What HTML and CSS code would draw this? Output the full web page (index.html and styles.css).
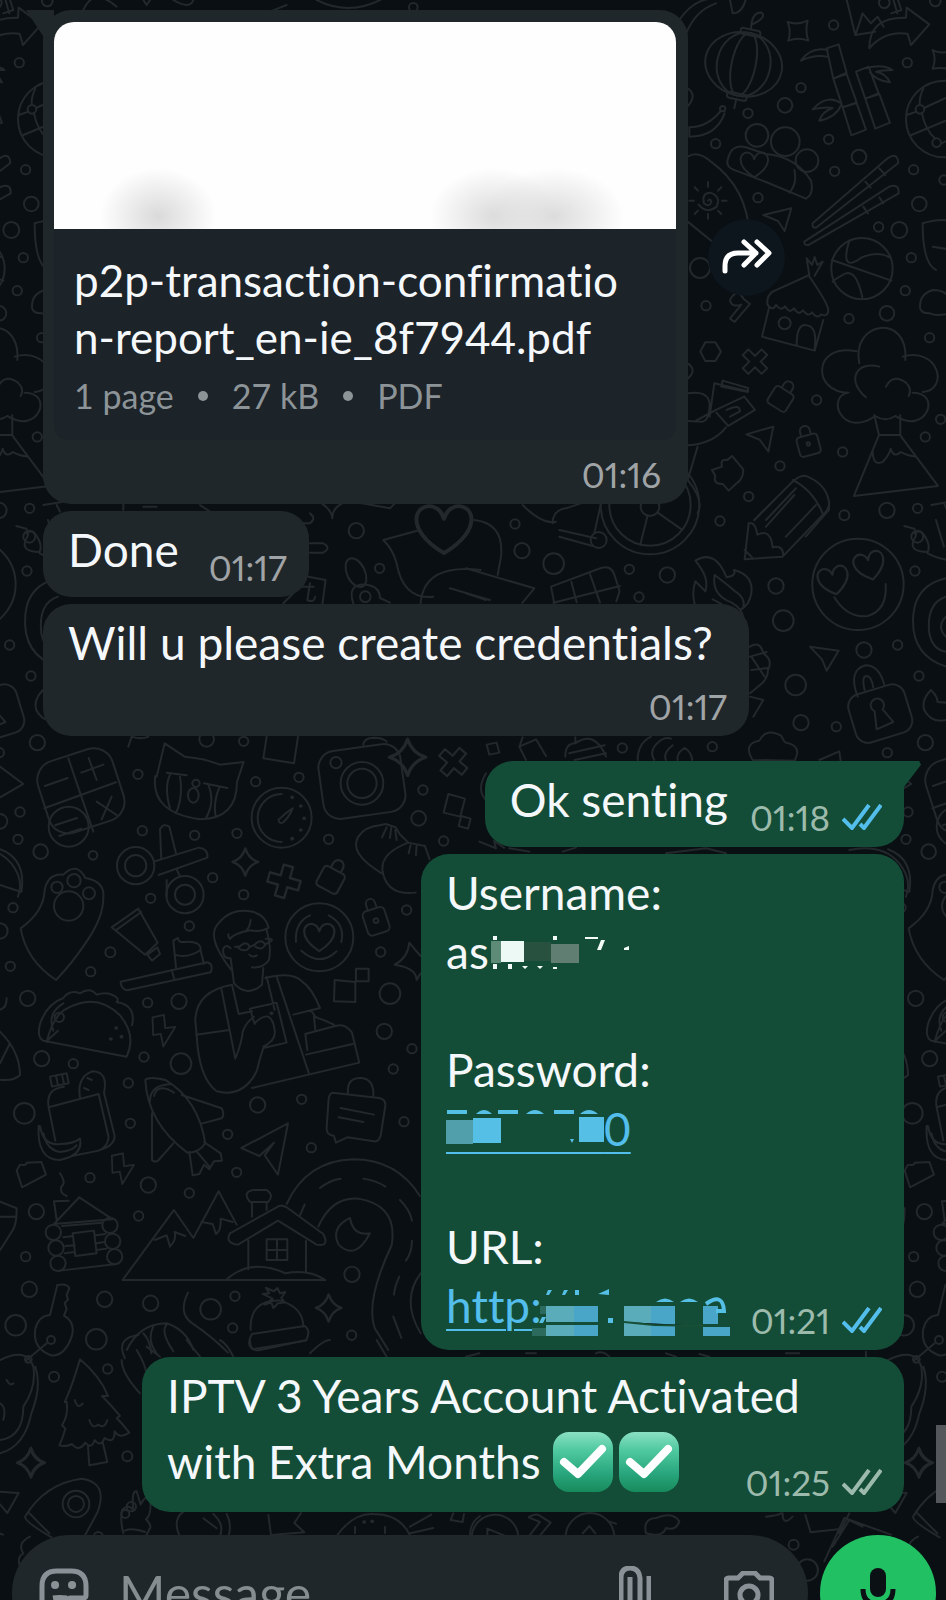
FILE: index.html
```html
<!DOCTYPE html>
<html lang="en">

<head>
    <meta charset="UTF-8">
    <meta name="viewport" content="width=device-width, initial-scale=1.0">
    <title>Chat</title>
    <link rel="stylesheet" href="styles.css">
</head>

<body>
    <!-- Doodle wallpaper, repeats every 888px -->
    <svg class="wallpaper" aria-hidden="true">
        <defs>
            <path id="star" d="M0-34Q8-8 32 0Q8 8 0 34Q-8 8-32 0Q-8-8 0-34Z" />
            <path id="cross" d="M-12-40h24v28h28v24h-28v28h-24v-28h-28v-24h28z" />
            <g id="lock">
                <rect x="-32" y="-22" width="64" height="60" rx="10" />
                <path d="M-15-22v-14a15 15 0 0 1 30 0v14" />
            </g>
            <path id="bolt" d="M-32-42l36-8 4 42 32-4-38 62-8-40-24 4z" />
            <path id="heart" d="M0 34C-60-4-44-44-18-40Q-4-36 0-20Q4-36 18-40C44-44 60-4 0 34Z" />
            <path id="dart" d="M-42-28L42-34 12 36-6-4Z" />
            <g id="tile">
                <g transform="scale(.3333)">
                    <path d="M20-30l20 60-30 10M250 30q30-70 100-10M410-30l30 45 20-30M520 0q50 30 60 0" />
                    <path d="M810 35l50-20M950 0q100 50 200-5" />
                    <circle cx="1240" cy="22" r="13" />
                </g>
                <g transform="translate(466) scale(.3333)">
                    <!-- lantern -->
                    <g transform="rotate(12 833 193)">
                        <ellipse cx="833" cy="193" rx="116" ry="96" />
                        <ellipse cx="833" cy="193" rx="80" ry="96" />
                        <ellipse cx="833" cy="193" rx="36" ry="96" />
                        <rect x="803" y="86" width="60" height="18" rx="8" />
                        <rect x="803" y="282" width="60" height="18" rx="8" />
                        <path d="M833 86q-10-50 20-56q20 10-20 40M833 300v28" />
                    </g>
                    <circle cx="770" cy="326" r="8" />
                    <path d="M765 332q-40 50-95 50v28q80 0 106-70" />
                    <path d="M640 60q40-60 100-65M660 100q30-70 90-90M790-10l10 50q30 0 40-45" />
                    <path d="M965 66q30 10 60-4q-8 30 2 60q-30-12-60 0q10-28-2-56z" />
                    <path d="M1140-10l28 115 60-10M1170 100l20-60 25 30 20-20 18 30M1280-10l14 50" />
                    <path d="M1210 145q0-95 110-92l2-30 68 50-55 62-10-34q-70-10-115 44z" />
                    <!-- bamboo -->
                    <path d="M1082 145l36-12 24 85-40 18zM1102 236l40-14 30 85-42 15zM1130 322l42-13 28 80-44 17zM1085 150q-50-10-80 32q40-20 80-12" />
                    <path d="M1170 215l38-15 30 80-40 16zM1198 296l42-14 32 86-44 18zM1200 205q50-15 80 5q-30 0-50 5q30 5 42 32q-40-5-60-30" />
                    <path d="M1125 310q-40-30-85 18q40-8 60-4q-30 10-40 38q50-10 65-46" />
                    <path d="M1400 150q20 12 60 4q-10 30 0 56q-30-10-60-4q12-30 0-56z" />
                    <!-- beach ball -->
                    <circle cx="1435" cy="357" r="115" />
                    <circle cx="1362" cy="328" r="13" />
                    <circle cx="1412" cy="428" r="13" />
                    <path d="M1372 266q-14 30-10 50M1322 345l30-10M1368 340q10 50 40 76M1374 324l110-50M1336 405l160-66M1424 432q30-20 120-30" />
                    <!-- people -->
                    <circle cx="873" cy="406" r="34" />
                    <circle cx="958" cy="425" r="43" />
                    <circle cx="1023" cy="482" r="34" />
                    <path d="M785 480q10-50 55-38l60 20q90 8 135 80q10 40-15 54l-120-50-100-38q-20-10-15-28zM985 510q10 40-15 68" />
                    <use href="#heart" x="865" y="498" />
                    <!-- sun hill -->
                    <path d="M665 470q30-20 70 15q110 80 115 220M665 665l80 65" />
                    <path d="M726 602q8-8 10 4q-6 18-22 4q-8-30 18-32q34 10 20 42q-30 24-54-6" />
                    <path d="M726 560v-14M726 642v14M684 602h-14M768 602h14M696 572l-10-10M756 572l10-10M696 632l-10 10M756 632l10 10" />
                    <path d="M892 645l84-20-20 68-20-30z" />
                    <!-- chopsticks -->
                    <path d="M1040 670l225-195q30-20 32 14l-245 193q-15 4-12-12zM1198 545l16 18M1240 505l18 20" />
                    <path d="M1015 725l255-165q30-10 28 20l-270 155q-14 2-13-10zM1192 620l14 20M1240 592l12 18" />
                    <!-- basketball -->
                    <circle cx="1188" cy="806" r="92" />
                    <path d="M1098 780l178 62M1150 722q-30 100 38 50q50-20 82 0M1190 896q-20-100-62-70q-20 10-28 20" />
                    <!-- hut -->
                    <path d="M1030 825l-8-50 16 20 8-24 8 24 16-10-24 42M1030 825l-110 50q-20 15-15 40q15 20 25 0q15 20 27 4q15 24 27 6q15 24 27 6q15 22 27 6q15 22 27 6q20 10 22-12q0-20-60-106M910 920l-22 90 158 42 26-92M992 1035q0-70 34-58q28 6 20 68" />
                    <circle cx="956" cy="970" r="18" />
                    <path d="M792 900q20-40 42-2l18 14-46 54-14-10 34-42q-30 10-34-14z" />
                    <path d="M718 1027h30l17 28-17 28h-30l-15-28z" />
                    <use href="#cross" transform="translate(867 1085) rotate(45)" />
                    <use href="#lock" transform="translate(948 1190) rotate(32)" />
                    <g transform="translate(1026 1328) rotate(-15)">
                        <use href="#lock" />
                        <circle r="5" cy="4" />
                    </g>
                    <use href="#dart" transform="translate(888 1322) rotate(-12)" />
                    <!-- tree and volcano -->
                    <path d="M1180 1090c-25-130 150-150 138-10M1310 1070c110-30 140 100 60 106M1340 1178c90 0 40 130-52 70q-30 20-60 0c-100 70-150-60-80-70c-110 0-110-150 24-124M1200 1192c-60-50-30-110 40-92M1260 1160q20-40 60-12q20 20 8 40M1225 1245l14 60h64v-60M1238 1308l-74 180 252-30-112-150M1220 1350q0 50 30 36q20-20 24-40q10 30 30 10q20 12 46 14" />
                    <!-- money hand -->
                    <path d="M665 1180q60-10 66 30q0 60-30 55l-36-2M745 1150l-14 100M745 1150l100 24M770 1142l76 22v12l-80-16zM690 1262l60-32 85-40 32 40-80 48-36-40M782 1230q40-20 40 4l-30 16M780 1282q-40 50-115 54M695 1340l-30 100" />
                    <path d="M738 1410l30-10q-6-24 16-20l14-12 34 40q0 30-20 42l-24 22-18-20q-30 0-22-24z" />
                    <path d="M865 1560l110-110q30-30 50-20q70 30 64 100l-70 80M980 1440q60 30 90 100M900 1560l90-95" />
                    <path d="M1370 670q70-20 90 0M1370 670q0 120 40 140M1400 740l60 10" />
                    <path d="M1362 920q0-40 40-50q40 0 50 30v40q-40 10-60 0q-30 0-30-20" />
                    <path d="M665 1440q50 60 30 100M665 265q30 20 0 54M665 1090q30 20 0 46" />
                    <circle cx="1103" cy="75" r="14" />
                    <circle cx="1324" cy="188" r="14" />
                    <circle cx="1255" cy="8" r="16" />
                    <circle cx="1408" cy="3" r="16" />
                    <circle cx="1005" cy="263" r="14" />
                    <circle cx="957" cy="316" r="22" />
                    <circle cx="846" cy="340" r="14" />
                    <circle cx="749" cy="431" r="14" />
                    <circle cx="1088" cy="418" r="14" />
                    <circle cx="1179" cy="471" r="22" />
                    <circle cx="1106" cy="514" r="14" />
                    <circle cx="1343" cy="509" r="14" />
                    <circle cx="1434" cy="540" r="14" />
                    <circle cx="876" cy="593" r="14" />
                    <circle cx="1360" cy="612" r="22" />
                    <circle cx="1238" cy="681" r="14" />
                    <circle cx="1300" cy="690" r="24" />
                    <circle cx="1336" cy="773" r="14" />
                    <circle cx="702" cy="804" r="30" />
                    <circle cx="1318" cy="872" r="14" />
                    <circle cx="720" cy="917" r="14" />
                    <circle cx="1263" cy="940" r="22" />
                    <circle cx="1149" cy="956" r="14" />
                    <circle cx="1391" cy="1013" r="14" />
                    <circle cx="1052" cy="1200" r="14" />
                    <circle cx="1424" cy="1258" r="14" />
                    <circle cx="1378" cy="1311" r="14" />
                    <circle cx="1130" cy="1356" r="14" />
                    <circle cx="942" cy="1398" r="14" />
                    <circle cx="848" cy="1490" r="14" />
                </g>
                <g transform="translate(0 500) scale(.3333)">
                    <!-- strip between and beside the bubbles -->
                    <path d="M130 15l60-10M170 15l10 20M370 10v20M430 20h40M600 15l30 20M930 40q20 15 0 30h-40M930 130h40q25 12 0 28h-40M925 230l52 10-10 75M905 260h36M930 250l-8 50q20 10 24-10M850 310l30-30" />
                    <path d="M965 10q30 20 32 45q0-30 30-45M1060 5l110 20 20-20M1150 120l110-30M1150 120q30 30 40 70q20 110 110 100M1262 310q10-120 180-100M1350 265l120 35" />
                    <use href="#heart" transform="translate(1332 95) scale(2 1.9)" />
                    <ellipse cx="1068" cy="218" rx="27" ry="46" transform="rotate(-25 1068 218)" />
                    <path d="M1060 310q-20-60 40-56q40 6 40 40l30 14" />
                    <circle cx="1096" cy="290" r="16" />
                    <circle cx="1069" cy="92" r="23" />
                    <circle cx="1139" cy="205" r="14" />
                    <!-- calculator -->
                    <rect x="125" y="760" width="235" height="225" rx="60" transform="rotate(-18 243 872)" />
                    <path d="M205 775l75 220M133 925l215-78M135 858l68-24M244 818l66-24M266 774l24 66M290 905l60 40M335 890l-30 68" />
                    <circle cx="206" cy="980" r="60" />
                    <path d="M165 976l66-22M178 1008l66-22" />
                    <!-- cat -->
                    <path d="M470 830l24-100 60 40q60 5 105 24l72-8-20 60q0 110-110 112q-150-20-135-130zM500 818l60 8M612 850l70 14M510 824q-18 40 0 100M540 830q10 60-12 110M626 856q20 50-8 98M658 862q-20 50-10 90" />
                    <ellipse cx="580" cy="886" rx="16" ry="22" />
                    <circle cx="588" cy="850" r="11" />
                    <path d="M800 710l-10 65 92 15 12-80M385 740l10-30q30 10 50 0" />
                    <!-- dial -->
                    <circle cx="845" cy="953" r="90" />
                    <path d="M845 882a72 72 0 1 0 0 144M878 925q-20 12-42 34q0 14 14 8q20-20 28-42z" />
                    <path class="dots" d="M876 892h1M902 918h1M912 955h1M902 990h1M876 1016h1" />
                    <!-- camera -->
                    <rect x="962" y="742" width="248" height="205" rx="50" transform="rotate(-8 1086 845)" />
                    <circle cx="1086" cy="850" r="64" />
                    <circle cx="1086" cy="850" r="44" />
                    <circle cx="1008" cy="788" r="17" />
                    <path d="M1090 735q0-20 30-22q30 0 40 12" />
                    <use href="#star" transform="translate(1223 772) scale(1.7 1.6)" />
                    <use href="#cross" transform="translate(1360 786) rotate(40) scale(1.1)" />
                    <path d="M1345 882l50 14-14 54-50-12zM1384 948l28 8-8 30-28-8z" />
                    <path d="M1145 1120q-100-60-70-110q20-30 64-34l18-4 30 10 12 20 26 26q-80 30-78 80q10 80 100 70M1225 1028l50 10 14 40M1160 982l-14 30M1174 984l-4 30M1186 990l4 30M1232 1036l-6 24M1250 1036l-2 30" />
                    <!-- toothed fan -->
                    <circle cx="407" cy="1097" r="56" />
                    <circle cx="407" cy="1097" r="32" />
                    <circle cx="555" cy="1184" r="56" />
                    <circle cx="555" cy="1184" r="30" />
                    <path d="M462 1085l134-42q30 4 26 30l-146 52M484 1078l-4-90q10-20 28-8l20 80M500 1140v50M540 1130l-10-22" />
                    <use href="#star" transform="translate(736 1086) scale(1.2)" />
                    <use href="#cross" transform="translate(852 1144) rotate(16) scale(1.2)" />
                    <use href="#lock" transform="translate(996 1132) rotate(28) scale(1.1)" />
                    <circle cx="112" cy="728" r="23" />
                    <circle cx="620" cy="718" r="22" />
                    <circle cx="731" cy="724" r="14" />
                    <circle cx="414" cy="823" r="14" />
                    <circle cx="767" cy="845" r="14" />
                    <circle cx="897" cy="832" r="14" />
                    <circle cx="1269" cy="870" r="14" />
                    <circle cx="1256" cy="955" r="22" />
                    <circle cx="60" cy="936" r="14" />
                    <circle cx="0" cy="964" r="22" />
                    <circle cx="427" cy="992" r="14" />
                    <circle cx="584" cy="1006" r="14" />
                    <circle cx="711" cy="1000" r="14" />
                    <circle cx="986" cy="1018" r="14" />
                    <circle cx="1331" cy="1023" r="14" />
                    <circle cx="54" cy="1018" r="14" />
                    <circle cx="122" cy="1055" r="22" />
                    <circle cx="279" cy="1066" r="13" />
                    <circle cx="638" cy="1133" r="14" />
                    <circle cx="731" cy="1184" r="14" />
                    <path d="M0 800l70 52-70 40M0 1048q80 30 64 128L0 1155" />
                </g>
                <g transform="translate(466 500) scale(.3333)">
                    <!-- wheel -->
                    <circle cx="552" cy="15" r="148" />
                    <circle cx="552" cy="15" r="122" />
                    <circle cx="552" cy="20" r="28" />
                    <path d="M545 46l-22 88M575 38l72 50M25 60q90 10 80 110l-10 55M0 205l205 60-36 44M0 280l60 20M170 15q60 60 100 50M260 70q0-40 40-45l60-20M280 90l110 25M280 110l100 28M405 10l-20 90" />
                    <circle cx="398" cy="120" r="24" />
                    <!-- grid box -->
                    <path d="M255 260l150-56q30-10 40 20l16 50-10 30M255 260l10 50M316 245l16 62M372 222l30 86M262 308l200-50" />
                    <!-- flame -->
                    <path d="M688 320q-12-40 0-76l30 30q14-40-30-92q60-36 94 50q30-4 22-22q60 16 52 70q-6 36-32 48M746 225q-10 60 50 82q36 20 36 52M746 225q40 30 60 48q34 20 26 52M740 298l26 14" />
                    <!-- pencil -->
                    <path d="M865 60l65-65M1090 5q0 24-20 40l-120 125-114 8 12-108q20-6 26 34q40-20 46 38q30-8 32 22M900 80l85-95M960 110l90-95M836 150l26 26" />
                    <!-- smiley -->
                    <circle cx="1176" cy="253" r="137" />
                    <use href="#heart" transform="translate(1104 246) rotate(-12) scale(1.1)" />
                    <use href="#heart" transform="translate(1212 202) rotate(-14) scale(1.1)" />
                    <path d="M1105 292q40 64 100 56q60-18 54-96" />
                    <path d="M1032 440l86 12-36 60-14-34z" />
                    <path d="M1315 78l30 8q10 20 0 30q-20 40 40 40q10-20-10-50q-10-20-30-6M1385 160q40 20 70 20M1410 60l24 80" />
                    <circle cx="1354" cy="110" r="18" />
                    <path d="M1440 235q-90 20-98 110q-10 120 98 155M1440 290q-60 20-50 110q10 50 50 55M1440 350q-30 30 0 60" />
                    <!-- padlock -->
                    <rect x="1155" y="566" width="175" height="150" rx="38" transform="rotate(-17 1242 640)" />
                    <path d="M1175 590q-30-80 24-94q40 0 56 58M1196 570q-10-42 6-42q14 0 20 34" />
                    <path d="M1226 634a20 20 0 1 1 24-6l32 38-50 22z" />
                    <path d="M1395 570q-30 30-20 60q20 40 66 30M1395 570q20 20 20 36l26 2" />
                    <path d="M852 440q30-20 40 20q30 20 14 50q0 30-30 50l-24 20M852 470l50-14M856 510l50-6M856 470l40 60M852 590l40 10-30 50" />
                    <path d="M62 734l30-6 8 30-30 6zM160 740l10-28M160 740l50-22 30 50M160 740l20 40M298 770q0-40 30-40v-18M310 760l106-24M326 780l94-20M328 730q60-40 92 40M515 780q0-50 40-70M565 780q-20-30 20-60q16-10 30-4M600 780q-10-20 20-44M635 780q-4-20 20-36q20 10 24 36" />
                    <path d="M860 780q-30-50 20-58q20-40 66-14q10 20 14 20q50 10 26 54zM1060 780l60-26 4 28" />
                    <circle cx="147" cy="72" r="14" />
                    <circle cx="168" cy="152" r="23" />
                    <circle cx="263" cy="191" r="31" />
                    <circle cx="490" cy="208" r="14" />
                    <circle cx="519" cy="291" r="14" />
                    <circle cx="604" cy="225" r="23" />
                    <circle cx="762" cy="63" r="14" />
                    <circle cx="930" cy="258" r="23" />
                    <circle cx="952" cy="362" r="31" />
                    <circle cx="1135" cy="46" r="15" />
                    <circle cx="1263" cy="31" r="23" />
                    <circle cx="1355" cy="25" r="14" />
                    <circle cx="1347" cy="213" r="14" />
                    <circle cx="1295" cy="435" r="14" />
                    <circle cx="1194" cy="450" r="23" />
                    <circle cx="989" cy="555" r="31" />
                    <circle cx="1359" cy="528" r="14" />
                    <circle cx="1005" cy="668" r="23" />
                    <circle cx="1111" cy="680" r="14" />
                    <circle cx="1264" cy="758" r="14" />
                    <circle cx="469" cy="744" r="14" />
                    <circle cx="739" cy="740" r="14" />
                    <path d="M60 820q-30 50 0 80M40 1025l50 20-6-22 30 20M130 1045l60 10M290 1055l40-12M600 1060l120-15 60 15M1150 1050q100-20 150 40q40 50 20 100" />
                </g>
                <g transform="translate(0 850) scale(.3333)">
                    <!-- paw -->
                    <path d="M168 390q-90-60-106-155q70-50 72-115q10-50 56-46q40-40 66 10q60 10 54 60q0 60-54 136q-40 60-88 110z" />
                    <circle cx="206" cy="168" r="44" />
                    <circle cx="171" cy="112" r="17" />
                    <circle cx="222" cy="92" r="20" />
                    <circle cx="267" cy="130" r="18" />
                    <!-- toothpaste and brush -->
                    <path d="M335 232l80-56 58 102-38 36zM346 242l78-56M442 314l30-22 8 20-24 20z" />
                    <path d="M362 395l260-58q20 6 10 30l-250 54q-20-4-20-26zM515 360l8 28M528 352l-8-80 14-8q0 14 20 12q50-4 48 26l10 40M524 314q40 12 78-14" />
                    <!-- barista -->
                    <path d="M694 360q-70-90-46-130q40-60 110-45q40 12 48 48q-20 14-56 8q-50 10-60 26q-8-10-4-14M752 210q-2 24-16 34M800 240q16 60 6 92q-20 24-50 20M690 325q-24 0-20-30q10-14 22 0M692 325l10 75q40 44 84 4l4-50M705 290h14q20-20 30 0q-12 20-34 4M752 290l12-6q20-20 32 0q-10 20-30 6M795 284l20-12q4-8-18-6M748 314q10 10 22 2" />
                    <path d="M696 404q-110 20-110 110l4 40q6 130 60 170q80 20 120-60q10-40 20-70l70-16-30-120-80 18 14 46M696 404l20 88 40-8M664 416l42 210q20-50 22-80q10-30 34-45M588 554l100-14M800 380l24 100M830 380l96 288M796 384q80-20 110 10q30 20 54 80l-80 20M790 590q40-20 34-50q-10-70-60-20M756 714l322-76-22-90q-20-30-50-20l-90 24 6 48M918 614l140-32M946 540l-4-40q30 10 60 24M946 500l-14-20" />
                    <path class="dots" d="M814 490h1" />
                    <!-- cup -->
                    <circle cx="958" cy="262" r="102" />
                    <use href="#heart" transform="translate(958 266) scale(1.1)" />
                    <path d="M930 196q-46 20-42 80M986 196q50 26 38 80M904 302q56 50 106 2" />
                    <path d="M1004 390l62 6v60l-64-2zM1068 356h38v38h-38z" />
                    <g transform="translate(1128 212) rotate(-18)">
                        <rect x="-34" y="-36" width="68" height="76" rx="14" />
                        <path d="M-14-36v-16a14 16 0 0 1 28 0v16" />
                        <circle r="7" />
                    </g>
                    <path d="M1262 370l-12 20q0-36-66-46q40-20 44-66q16 20 34 40" />
                    <!-- taco -->
                    <path d="M140 576q20-80 60-100q90-50 160 20q50 60 20 124l-250-48q-20-10-10-50q20-60 70-78q20-26 50-14q30-20 50 4q30-10 50 2q20 10 10 20q60 10 46 70M190 460q-50 30-30 82M140 574l34-32" />
                    <circle cx="178" cy="502" r="14" />
                    <path class="dots" d="M348 534h1M364 560h1M332 567h1" />
                    <use href="#bolt" transform="translate(488 542) scale(.95)" />
                    <!-- backpack -->
                    <path d="M146 772q-10-56 46-62M240 742q-10-60 36-78q50 0 36 66M146 772l150-40M146 772l20 100M296 732l30 130q-4 30-30 40l-80 16M312 728l32 130q0 30-50 44M150 680l50-10 6 30-50 10zM168 678l6 28M186 674l6 28M262 684l14 6M252 714l14 6M120 828q10 60 60 54q40 0 60-16q10 50-60 64q-70 0-64-102z" />
                    <path d="M130 850q10 50 50 56q40-4 50-20" />
                    <!-- rocket -->
                    <path d="M436 690q10-12 60 0q100 60 120 190q-20 30-54 28q-120-90-126-218zM450 755q0-50 60-52M462 738q10-40 60-10M545 735l120 40q10 20 0 30l-60 16M456 790v140q10 10 20 0l44-50M568 906l10 70 20-4 14-28 16 14 14-24 24-2-4-22-50-34M590 904l40 48" />
                    <!-- chat bag -->
                    <path d="M998 728l140 16q20 4 18 24l-14 90q-8 20-20 16l-80-12-34 16-6-20q-24-4-22-24l6-88q4-18 12-18zM1044 730q-4-48 40-46q40 4 36 56M1022 774l100 20M1016 802l74 14" />
                    <path d="M864 820l-30 154-40-58 28-38-44 40-54-24z" />
                    <path d="M50 962l10-18q20 4 20-6l44-2 14 38-72 38zM180 970q20 30 4 40q-6 20 16 28" />
                    <use href="#bolt" transform="translate(365 956) scale(.92)" />
                    <!-- cabin -->
                    <path d="M162 1122l76-80 100 66zM170 1110l-8-56 44-2M186 1128l120-10M190 1162l30-4M288 1156l28-4M196 1188l28-2M290 1180l24-4M180 1262l170-20M218 1150l64-8 8 68-64 8zM194 1210l30-4M290 1200l30-4" />
                    <circle cx="160" cy="1147" r="23" />
                    <circle cx="168" cy="1194" r="23" />
                    <circle cx="174" cy="1240" r="23" />
                    <circle cx="330" cy="1126" r="23" />
                    <circle cx="338" cy="1174" r="23" />
                    <circle cx="344" cy="1220" r="23" />
                    <!-- mountains and house -->
                    <path d="M368 1290h608q-50-34-120-20q-100-46-174 16M368 1290l154-210 58 84 76-140 54 100M464 1170l36-14 10 34q20-20 14-44l32 12M604 1116l34 6 10 30q16-10 14-46l36 10" />
                    <path d="M690 1150l140-78q14-10 30 0l110 80q20 40-20 32l-116-72-120 72q-40-4-24-34zM745 1172v86M918 1172v94M756 1100v-44M800 1080v-24M750 1056q-24-30 10-36h40q24 16 4 36zM800 1168h62v62h-62zM831 1168v62M800 1200h62" />
                    <path d="M1050 1104q-60 30-34 80q50 50 94-34q-50 10-60-46z" />
                    <!-- road -->
                    <path d="M860 1062q60-130 200-134q130 0 200 110M955 1130q40-90 120-84q120 20 100 140q-80 170-50 250l40 64M1262 1270q-60 80 0 180M960 1014q30-24 62-28M1090 986q40 6 66 24M1200 1050q30 30 36 62M1236 1172q0 34-18 60M1198 1280q-14 30-16 54M1180 1400l24 64M900 1096l14-32" />
                    <!-- key -->
                    <path d="M150 1395l22-90q30-6 36 10l-8 20 4 14-10 10 6 18-8 20q34 20 24 60q-20 60-60 60q-60-20-50-80q10-40 44-42" />
                    <circle cx="153" cy="1470" r="12" />
                    <!-- hat -->
                    <path d="M752 1440q-4-90 88-88q70 20 70 78M756 1452l158-24q20 14 4 44l-160 26q-20-16-2-46zM818 1346l-30-14 20-2-10-16 24 10 10-10 8 16 16-4-12 18 10 14-20 2-14 14-6-16-20 6z" />
                    <use href="#star" transform="translate(986 1374) scale(1.2)" />
                    <path d="M564 1328q-30 60 10 90q60 40 110 90M380 1500q40-80 120-80q60 20 80 80M430 1450q20 20 24 60M460 1430q-20 40 10 80M500 1424q-20 20 20 80" />
                    <circle cx="39" cy="173" r="14" />
                    <circle cx="0" cy="243" r="23" />
                    <circle cx="452" cy="145" r="14" />
                    <circle cx="568" cy="228" r="14" />
                    <circle cx="1220" cy="180" r="14" />
                    <circle cx="331" cy="307" r="15" />
                    <circle cx="1142" cy="306" r="14" />
                    <circle cx="31" cy="349" r="14" />
                    <circle cx="272" cy="365" r="14" />
                    <circle cx="1170" cy="431" r="31" />
                    <circle cx="83" cy="445" r="23" />
                    <circle cx="443" cy="458" r="14" />
                    <circle cx="537" cy="454" r="23" />
                    <circle cx="1153" cy="544" r="23" />
                    <circle cx="1236" cy="596" r="14" />
                    <circle cx="125" cy="626" r="23" />
                    <circle cx="220" cy="641" r="14" />
                    <circle cx="432" cy="621" r="14" />
                    <circle cx="543" cy="641" r="31" />
                    <circle cx="1180" cy="657" r="14" />
                    <circle cx="385" cy="699" r="14" />
                    <circle cx="773" cy="765" r="23" />
                    <circle cx="905" cy="748" r="14" />
                    <circle cx="73" cy="790" r="31" />
                    <circle cx="391" cy="820" r="14" />
                    <circle cx="683" cy="853" r="14" />
                    <circle cx="1212" cy="815" r="14" />
                    <circle cx="934" cy="893" r="14" />
                    <circle cx="710" cy="967" r="14" />
                    <circle cx="270" cy="983" r="14" />
                    <circle cx="445" cy="1005" r="23" />
                    <circle cx="568" cy="1029" r="14" />
                    <circle cx="109" cy="1085" r="23" />
                    <circle cx="416" cy="1098" r="14" />
                    <circle cx="77" cy="1220" r="14" />
                    <circle cx="1056" cy="1273" r="23" />
                    <circle cx="88" cy="1318" r="23" />
                    <circle cx="314" cy="1348" r="23" />
                    <circle cx="452" cy="1360" r="23" />
                    <circle cx="632" cy="1378" r="31" />
                    <circle cx="705" cy="1339" r="14" />
                    <circle cx="698" cy="1434" r="14" />
                    <circle cx="1055" cy="1456" r="14" />
                    <circle cx="47" cy="1426" r="31" />
                    <circle cx="289" cy="1468" r="31" />
                    <path d="M0 545q60 60 60 130q-20 20-60 14M0 1055l50 20q0 50-12 66l-38 60M0 640l30-60M20 445q0 30-20 34M0 1100h46" />
                </g>
                <g transform="translate(0 1340) scale(.3333)">
                    <!-- pea pod -->
                    <path d="M0 60q80-40 100 20q10 60-30 120q0 90-70 100M80 60l60-50M106 80q20 60-12 140q-20 100-94 120M20 120q10 20 20 10M0 190q20 10 10 50" />
                    <circle cx="85" cy="58" r="10" />
                    <!-- pine -->
                    <path d="M240 58q60 50 84 110h-18q30 30 54 60l-10 6q20 20 38 44q-30 20-44-4q0 40-30 20q-12 30-30 6q-10 30-28 8q-20 30-40 4q-20 10-38 4q10-20 18-50l-10-10q20-30 14-70h-6q20-40 46-128zM264 320l4 56 54-10-14-60M224 180q10 30 24 10M268 240q10 30 26 14q20 14 28-14" />
                    <use href="#star" transform="translate(93 368) scale(1.3)" />
                    <path d="M0 455l56 4-34 60-22-26M75 530q60-100 170-114q80 10 48 100l-40 74M75 530q0 16 80 62M88 520l60 60M90 590q-40 20-20 50q-20 10-10 40" />
                    <circle cx="228" cy="492" r="40" />
                    <circle cx="228" cy="492" r="24" />
                    <!-- hand -->
                    <path d="M370 580q-10-40-4-70q20-20 34 0q-6-60 10-56l12 40q20-40 30-6q0 40-14 50q20 20 10 30l-10 20M375 572q20-10 60 4" />
                    <circle cx="376" cy="522" r="12" />
                    <circle cx="394" cy="500" r="14" />
                    <path d="M375 55q-30-60 40-70M410 30q50 80 20 130M365 60q0 40 55 100M440 20l40 30M560 0l40 50M660 0q20 10 40 50" />
                    <path d="M540 590q-24-50 10-75M640 522q34 30 20 66M680 522q16 30 6 66M610 535l40 30M805 525l8 60 100-8-30-28 20-30M1010 588q50-70 110-66q80 0 110 64M1230 560l64-36M1230 580l70-16M1065 580v-20M1155 580v-20M1360 520l-8 20 36 6 4-24M1410 588q0-40 30-60" />
                    <path class="dots" d="M1092 546h1M1116 544h1" />
                    <path d="M750 0q0 36 30 30l140-30M930 40q40-40 60-40M1130 0l30 50" />
                    <circle cx="162" cy="110" r="15" />
                    <circle cx="323" cy="87" r="14" />
                    <circle cx="382" cy="349" r="15" />
                    <circle cx="295" cy="590" r="14" />
                </g>
                <g transform="translate(466 1340) scale(.3333)">
                    <circle cx="87" cy="594" r="70" />
                    <path d="M64 586v-20l50 20M190 530q20-10 30-4l34 22-38 46M188 590l34-44-34-14" />
                    <circle cx="372" cy="592" r="73" />
                    <path d="M350 580l20-22 18 22M430 545l20 6M540 580q-10-44 30-46q50-20 70 10q-10 30-40 20q-10 30-60 16" />
                    <path d="M900 530q40-4 46-10M950 520q0 40 30 10M1018 525l16 52 90-10M1120 580l30-60M1075 664l60-130 140 50M1100 620l50-80 40 20" />
                    <circle cx="983" cy="614" r="15" />
                    <circle cx="1024" cy="690" r="32" />
                    <use href="#star" transform="translate(1358 368) scale(1.2)" />
                    <path d="M0 50l40-10M180 40h30M390 40q20-10 40 10M600 40l30 10M700 42l30 8M960 40h40M1200 35v15" />
                </g>
            </g>
        </defs>
        <use href="#tile" />
        <use href="#tile" x="888" />
        <use href="#tile" x="-888" />
    </svg>

    <div class="chat">
        <main class="messages">
            <div class="row">
                <div class="bubble document tail-in">
                    <div class="preview"></div>
                    <div class="file">
                        <div class="file-name">p2p-transaction-confirmation-report_en-ie_8f7944.pdf</div>
                        <div class="file-info"><span>1 page</span><i></i><span>27 kB</span><i></i><span>PDF</span></div>
                    </div>
                    <div class="meta"><time>01:16</time></div>
                </div>
                <button class="forward" aria-label="Forward">
                    <svg width="50" height="36" viewBox="0 0 50 36">
                        <path d="M3 32V27Q3 14 16 14H34M22 3l12 11-12 12M35 3l12 11-12 12" />
                    </svg>
                </button>
            </div>

            <div class="bubble inline">
                <div class="text">Done</div>
                <div class="meta"><time>01:17</time></div>
            </div>

            <div class="bubble stacked">
                <div class="text">Will u please create credentials?</div>
                <div class="meta"><time>01:17</time></div>
            </div>

            <div class="bubble out inline first tail-out">
                <div class="text">Ok senting</div>
                <div class="meta">
                    <time>01:18</time>
                    <svg class="ticks read" width="40" height="26" viewBox="0 0 40 26"><path d="M1 15l9 9L27 1M18 20l4 4L39 1" /></svg>
                </div>
            </div>

            <div class="bubble out credentials">
                <div class="text">Username:</div>
                <div class="text">as<svg class="hidden-part" width="150" height="40" viewBox="0 0 150 40" aria-hidden="true">
                        <path fill="#f2fbf7" d="M4 3h4v4H4zM64 3h4v4h-4zM4 31h4v5H4zM19 31h4v5h-4zM33 33h6l-3 3zM48 33h6l-3 3zM64 34h4v2h-4zM96 4h13v2H96zM112 7h4l-4 10h-4zM135 15l5-2v4h-5z" />
                        <path fill="#5d8b78" d="M2 8h10v22H2z" />
                        <path fill="#ecf9f5" d="M12 8h23v21H12z" />
                        <path fill="#28523f" d="M35 9h27v19H35z" />
                        <path fill="#617e72" d="M62 11h28v19H62z" />
                    </svg></div>
                <div class="text"><br></div>
                <div class="text">Password:</div>
                <div class="text"><a href="#"><svg class="hidden-part" width="158" height="40" viewBox="0 0 158 40" aria-hidden="true">
                        <path fill="#56bfe6" d="M1 2h20v4H1zM30 6q8-8 16 0zM52 2h20v4H52zM80 6q9-8 18 0zM108 2h20v4h-20zM134 6q9-8 18 0zM56 35l12 1zM124 31h4l-2 4z" />
                        <path fill="#509faa" d="M0 12h27v24H0z" />
                        <path fill="#56bfe6" d="M27 10h28v25H27zM133 9h25v25h-25z" />
                    </svg>0</a></div>
                <div class="text"><br></div>
                <div class="text">URL:</div>
                <div class="inline last">
                    <div class="text"><a href="#">http:</a><svg class="hidden-part url" width="200" height="50" viewBox="0 0 200 50" aria-hidden="true">
                            <path fill="#56bfe6" d="M16 2h4l-3 5h-3zM32 2h4l-3 5h-3zM43 2h4v5h-4zM66 6l11-5v6zM124 14q9-7 18 0zM148 14q9-7 18 0zM10 29h4l-3 6H7zM76 30h5v5h-5z" />
                            <path fill="#2b6a5c" d="M8 18h6v8H8zM0 40h14v8H0z" />
                            <path fill="#5aacbb" d="M14 18h28v16H14zM14 37h28v11H14zM92 18h27v30H92z" />
                            <path fill="#4aa6c8" d="M42 18h24v16H42zM42 37h24v11H42zM119 18h24v30h-24zM171 18h15v18h-15zM171 39h27v9h-27z" />
                            <path fill="none" stroke="#56bfe6" stroke-width="4" d="M174 16q17-12 18 7h-8" />
                            <path stroke="#174f37" stroke-width="2" d="M92 34l30 3 50 1" />
                        </svg></div>
                    <div class="meta">
                        <time>01:21</time>
                        <svg class="ticks read" width="40" height="26" viewBox="0 0 40 26"><path d="M1 15l9 9L27 1M18 20l4 4L39 1" /></svg>
                    </div>
                </div>
            </div>

            <div class="bubble out wide">
                <div class="text">IPTV 3 Years Account Activated with Extra Months <svg class="emoji" width="62" height="62" viewBox="0 0 62 62" role="img" aria-label="check mark">
                        <defs>
                            <linearGradient id="green" x1="0" y1="0" x2="0" y2="1">
                                <stop offset="0" stop-color="#8be0c4" />
                                <stop offset=".3" stop-color="#4fc9a0" />
                                <stop offset=".7" stop-color="#28a57c" />
                                <stop offset="1" stop-color="#188a5c" />
                            </linearGradient>
                        </defs>
                        <rect x="1" y="1" width="60" height="60" rx="16" fill="url(#green)" />
                        <path d="M12 31l14 12 24-25" />
                    </svg><svg class="emoji" width="62" height="62" viewBox="0 0 62 62" role="img" aria-label="check mark">
                        <rect x="1" y="1" width="60" height="60" rx="16" fill="url(#green)" />
                        <path d="M12 31l14 12 24-25" />
                    </svg>
                    <span class="meta">
                        <time>01:25</time>
                        <svg class="ticks" width="40" height="26" viewBox="0 0 40 26"><path d="M1 15l9 9L27 1M18 20l4 4L39 1" /></svg>
                    </span>
                </div>
            </div>
        </main>

        <form class="composer">
            <div class="field">
                <button type="button" aria-label="Emoji">
                    <svg width="50" height="50" viewBox="0 0 50 50">
                        <path d="M18 3h14q15 0 15 15v9q0 3-3 3H32q-4 0-4 4v9q0 4-4 4h-6Q3 47 3 32V18Q3 3 18 3zM14 30q6-1 14 0" />
                        <path class="eyes" d="M16 17h.1M33 17h.1" />
                    </svg>
                </button>
                <input type="text" placeholder="Message" aria-label="Message">
                <button type="button" aria-label="Attach">
                    <svg width="32" height="54" viewBox="0 0 32 54">
                        <path d="M30 10v28q0 14-14 14T2 38V12Q2 2 11 2t10 10v24q0 5-5 5t-5-5V11" />
                    </svg>
                </button>
                <button type="button" aria-label="Camera">
                    <svg width="50" height="44" viewBox="0 0 50 44">
                        <path d="M5 7h9l5-5h12l5 5h9q3 0 3 3v29q0 3-3 3H5q-3 0-3-3V10q0-3 3-3z" />
                        <circle cx="25" cy="24" r="9" />
                    </svg>
                </button>
            </div>
            <button class="mic" type="button" aria-label="Record voice message">
                <svg width="36" height="52" viewBox="0 0 36 52">
                    <rect x="10" y="1" width="16" height="29" rx="8" />
                    <path d="M3 22q0 15 15 15t15-15M18 37v13" />
                </svg>
            </button>
        </form>
        <div class="scrollbar"></div>
    </div>
</body>

</html>
```

FILE: styles.css
```css
* {
    box-sizing: border-box;
}

body {
    margin: 0;
    background: #0a0f13;
    color: #f5f8fb;
    font-family: Lato, "Open Sans", sans-serif;
    font-variant-ligatures: none;
}

button {
    padding: 0;
    border: none;
    background: none;
    cursor: pointer;
}

svg {
    display: block;
}

.wallpaper {
    position: absolute;
    top: 0;
    left: 0;
    width: 100%;
    height: 100vh;
    fill: none;
    stroke: #22282b;
    stroke-width: 6;
    stroke-linecap: round;
    stroke-linejoin: round;
}

.wallpaper .dots {
    stroke-width: 11;
}

.chat {
    position: relative;
    height: 100vh;
    overflow: hidden;
}

.messages {
    display: flex;
    flex-direction: column;
    align-items: flex-start;
    gap: 7px;
    padding: 10px 42px 23px 43px;
}

.row {
    display: flex;
    align-items: center;
    gap: 20px;
}

.bubble {
    position: relative;
    padding: 9px 22px 9px 25px;
    border-radius: 28px;
    background: #20272a;
}

.bubble.out {
    align-self: flex-end;
    background: #144d37;
}

.bubble.first {
    margin-top: 18px;
}

.tail-in::before,
.tail-out::after {
    content: "";
    position: absolute;
    top: 0;
    height: 26px;
    background: inherit;
}

.tail-in::before {
    left: -17px;
    width: 28px;
    clip-path: polygon(0 0, 100% 0, 100% 100%, 17px 100%);
}

.tail-out::after {
    right: -17px;
    width: 46px;
    clip-path: polygon(0 0, 96% 0, 100% 14%, 29px 100%, 0 100%);
}

.text {
    font-size: 46px;
    line-height: 59px;
}

.inline {
    display: flex;
    align-items: flex-end;
    gap: 22px;
}

.inline > .text {
    padding-bottom: 9px;
}

.meta {
    display: flex;
    justify-content: flex-end;
    align-items: center;
    gap: 12px;
    color: #a0a4a7;
    font-size: 35px;
    line-height: 42px;
    font-variant-numeric: proportional-nums;
}

.out .meta {
    color: #9dbbad;
}

.inline:not(.out) > .meta {
    margin-left: 8px;
}

.stacked .text {
    padding-right: 14px;
}

.stacked .meta {
    margin-top: 13px;
}

.ticks {
    fill: none;
    stroke: #9dbbad;
    stroke-width: 4;
}

.ticks.read {
    stroke: #53bdeb;
}

/* document message */
.document {
    flex: 0 1 645px;
    padding: 12px 12px 9px 11px;
}

.preview {
    height: 207px;
    border-radius: 20px 20px 0 0;
    background:
        radial-gradient(ellipse 58px 48px at 104px 194px, #dadada, transparent),
        radial-gradient(ellipse 64px 48px at 440px 194px, #dcdcdc, transparent),
        radial-gradient(ellipse 70px 48px at 500px 194px, #dcdcdc, transparent),
        #fefefe;
}

.file {
    height: 211px;
    padding: 23px 40px 23px 20px;
    border-radius: 0 0 14px 14px;
    background: #1c2329;
}

.file-name {
    font-size: 44px;
    line-height: 57px;
    word-break: break-all;
}

.file-info {
    display: flex;
    align-items: center;
    gap: 24px;
    margin-top: 9px;
    color: #8d9498;
    font-size: 34px;
    line-height: 42px;
}

.file-info i {
    width: 10px;
    height: 10px;
    border-radius: 50%;
    background: #8d9498;
}

.document .meta {
    margin-top: 13px;
    padding-right: 15px;
}

.forward {
    display: grid;
    place-items: center;
    width: 77px;
    height: 77px;
    border-radius: 50%;
    background: #0d151d;
}

.forward svg {
    fill: none;
    stroke: #fff;
    stroke-width: 5;
    stroke-linecap: round;
    stroke-linejoin: round;
}

/* credentials message */
.text a {
    color: #53bdeb;
    text-decoration: underline;
    text-decoration-thickness: 2px;
    text-underline-offset: 6px;
}

.hidden-part {
    display: inline-block;
    vertical-align: -4px;
}

.hidden-part.url {
    margin-left: -10px;
    vertical-align: -15px;
}

.credentials a .hidden-part {
    border-bottom: 2px solid #53bdeb;
    height: 46px;
    padding-bottom: 4px;
    vertical-align: -8px;
}

.credentials .text {
    height: 59px;
    white-space: nowrap;
}

.credentials .last {
    gap: 11px;
    height: 65px;
}

.credentials .last .text {
    height: 65px;
}

.wide {
    width: 762px;
    max-width: 100%;
}

.wide .meta {
    float: right;
    margin-top: 36px;
}

.emoji {
    display: inline-block;
    margin: 6px 4px 0 0;
    vertical-align: -14px;
}

.emoji path {
    fill: none;
    stroke: #fff;
    stroke-width: 8;
    stroke-linecap: round;
    stroke-linejoin: round;
}

/* composer */
.composer {
    display: flex;
    gap: 12px;
    padding: 0 10px 0 12px;
}

.field {
    display: flex;
    flex: 1;
    align-items: center;
    min-width: 0;
    height: 116px;
    padding: 0 34px 0 27px;
    border-radius: 58px;
    background: #20272a;
}

.field input {
    flex: 1;
    min-width: 0;
    padding: 0 0 0 30px;
    border: none;
    outline: none;
    background: none;
    color: #f5f8fb;
    font: 50px Lato, "Open Sans", sans-serif;
}

.field input::placeholder {
    color: #868d91;
}

.field button + button {
    margin-left: 73px;
}

.field svg {
    fill: none;
    stroke: #8b9297;
    stroke-width: 5;
}

.field .eyes {
    stroke-width: 8;
    stroke-linecap: round;
}

.mic {
    display: grid;
    flex: 0 0 116px;
    place-items: center;
    height: 116px;
    border-radius: 50%;
    background: #21c063;
}

.mic svg {
    fill: #0a1014;
    stroke: none;
}

.mic path {
    fill: none;
    stroke: #0a1014;
    stroke-width: 5;
}

.scrollbar {
    position: absolute;
    right: 0;
    bottom: 97px;
    width: 10px;
    height: 78px;
    background: #54575b;
}
```
